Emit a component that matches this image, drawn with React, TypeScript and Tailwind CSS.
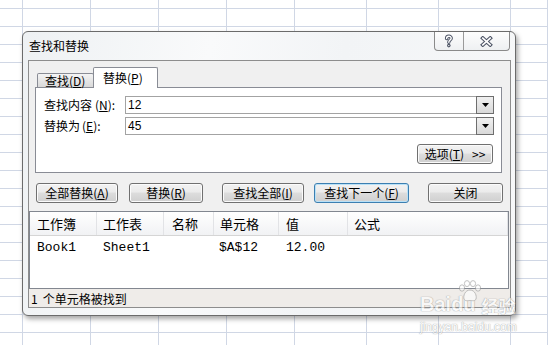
import React from "react";

function Btn({
  children,
  className,
  isDefault,
}: {
  children: React.ReactNode;
  className: string;
  isDefault?: boolean;
}) {
  return (
    <div
      className={
        className +
        " h-[20px] rounded-[3px] border flex items-center justify-center leading-none bg-[linear-gradient(#f2f2f2_0%,#ebebeb_45%,#dddddd_50%,#cfcfcf_100%)] " +
        (isDefault
          ? "border-[#3c7fb1] shadow-[inset_0_0_0_1px_#b9e1f7]"
          : "border-[#707070] shadow-[inset_0_0_0_1px_#fbfbfb]")
      }
    >
      {children}
    </div>
  );
}

function Combo({ value }: { value: string }) {
  return (
    <div className="w-[369px] h-[18px] flex border border-[#a3a3a3] bg-white">
      <span className="flex-1 pl-[2px] flex items-center font-['Liberation_Sans',sans-serif] text-[12px] leading-none">
        {value}
      </span>
      <div className="-my-px -mr-px w-[18px] border border-[#6e6e6e] bg-[linear-gradient(#f0f0f0,#d9d9d9)] flex items-center justify-center">
        <svg width="7" height="4" viewBox="0 0 7 4">
          <polygon points="0,0 7,0 3.5,4" fill="#000" />
        </svg>
      </div>
    </div>
  );
}

function HelpIcon() {
  const d = "M2.6 4.6 C2.6 1.6 7.2 1.6 7.2 4.2 C7.2 6 4.8 6.1 4.8 8.2";
  return (
    <svg width="10" height="14" viewBox="0 0 10 14">
      <path d={d} fill="none" stroke="#4e5566" strokeWidth="3.4" strokeLinecap="round" />
      <path d={d} fill="none" stroke="#ffffff" strokeWidth="1.4" strokeLinecap="round" />
      <circle cx="4.8" cy="11.6" r="1.8" fill="#4e5566" />
      <circle cx="4.8" cy="11.6" r="0.7" fill="#ffffff" />
    </svg>
  );
}

function CloseIcon() {
  const d = "M2.8 2.2 L10.2 8.8 M10.2 2.2 L2.8 8.8";
  return (
    <svg width="13" height="11" viewBox="0 0 13 11">
      <path d={d} fill="none" stroke="#4e5566" strokeWidth="3.8" strokeLinecap="square" />
      <path d={d} fill="none" stroke="#ffffff" strokeWidth="1.6" strokeLinecap="square" />
    </svg>
  );
}

function Dialog() {
  return (
    <div className="absolute left-[22px] top-[31px] w-[494px] h-[285px] rounded-[6px] border border-[#6b6b6b] bg-[linear-gradient(100deg,#eef1f3_0%,#f9fafb_35%,#f2f4f6_60%,#f7f8f9_100%)] shadow-[2px_3px_5px_rgba(0,0,0,0.35)] flex flex-col font-['Noto_Sans_CJK_SC',sans-serif] text-[12px] text-black">
      {/* title bar */}
      <div className="h-[28px] shrink-0 flex items-start justify-between">
        <span className="self-center pl-[6px] leading-none">查找和替换</span>
        <div className="mr-[5px] h-[19px] w-[76px] flex border border-t-0 border-[#8a8a8a] rounded-b-[4px] bg-[linear-gradient(#fdfdfd,#eef0f2)]">
          <div className="w-[29px] border-r border-[#9a9a9a] flex items-center justify-center">
            <HelpIcon />
          </div>
          <div className="flex-1 flex items-center justify-center">
            <CloseIcon />
          </div>
        </div>
      </div>

      {/* client area */}
      <div className="ml-[5px] mr-[4px] h-[248px] shrink-0 border border-[#8d8d8d] bg-[#f0f0f0] flex flex-col">
        <div className="mt-[6px] ml-[6px] mr-[8px]">
          <div className="flex items-end h-[20px] pl-[2px]">
            <div className="h-[14px] w-[57px] border border-b-0 border-[#898c95] rounded-t-[2px] bg-[linear-gradient(#f4f4f4,#d9d9d9)] flex items-center pl-[7px] leading-none">
              查找(<u>D</u>)
            </div>
            <div className="relative z-10 -ml-px -mb-px h-[21px] w-[65px] border border-b-0 border-[#898c95] rounded-t-[2px] bg-white flex items-center pl-[9px] leading-none">
              替换(<u>P</u>)
            </div>
          </div>
          <div className="h-[86px] border border-[#898c95] bg-white pt-[8px] flex flex-col">
            <div className="flex items-center h-[18px]">
              <span className="pl-[8px] w-[89px] leading-none">
                查找内容<span className="ml-[3px]">(<u>N</u>):</span>
              </span>
              <Combo value="12" />
            </div>
            <div className="mt-[3px] flex items-center h-[18px]">
              <span className="pl-[8px] w-[89px] leading-none">
                替换为<span className="ml-[2px]">(<u>E</u>):</span>
              </span>
              <Combo value="45" />
            </div>
            <Btn className="self-end mr-[8px] mt-[9px] w-[76px]">
              选项(<u>T</u>)<span className="ml-[8px]">&gt;&gt;</span>
            </Btn>
          </div>
        </div>

        <div className="mt-[10px] h-[20px] flex">
          <Btn className="ml-[7px] w-[82px]">
            全部替换(<u>A</u>)
          </Btn>
          <Btn className="ml-[11px] w-[74px]">
            替换(<u>R</u>)
          </Btn>
          <Btn className="ml-[19px] w-[82px]">
            查找全部(<u>I</u>)
          </Btn>
          <Btn isDefault className="ml-[10px] w-[95px]">
            查找下一个(<u>F</u>)
          </Btn>
          <Btn className="ml-[19px] w-[75px]">关闭</Btn>
        </div>

        {/* results list */}
        <div className="mt-[8px] mr-[1px] h-[78px] border border-[#828790] bg-white flex flex-col">
          <div className="h-[24px] shrink-0 flex border-b border-[#d5d5d5] bg-[linear-gradient(#ffffff,#f1f2f4)] text-[13px] leading-none">
            <div className="w-[67px] border-r border-[#e2e3e6] flex items-center pl-[7px]">工作簿</div>
            <div className="w-[67px] border-r border-[#e2e3e6] flex items-center pl-[6px]">工作表</div>
            <div className="w-[50px] border-r border-[#e2e3e6] flex items-center pl-[8px]">名称</div>
            <div className="w-[65px] border-r border-[#e2e3e6] flex items-center pl-[6px]">单元格</div>
            <div className="w-[69px] border-r border-[#e2e3e6] flex items-center pl-[7px]">值</div>
            <div className="flex-1 border-r border-[#e2e3e6] flex items-center pl-[6px]">公式</div>
          </div>
          <div className="h-[22px] flex items-center font-['Liberation_Mono',monospace] text-[13px] leading-none">
            <div className="w-[67px] pl-[7px]">Book1</div>
            <div className="w-[67px] pl-[6px]">Sheet1</div>
            <div className="w-[50px]" />
            <div className="w-[65px] pl-[5px]">$A$12</div>
            <div className="w-[69px] pl-[7px]">12.00</div>
          </div>
        </div>

        {/* status bar */}
        <div className="h-[18px] bg-[#efece9] flex items-center pl-[2px] pt-[1px] leading-none">
          <span>1</span>
          <span className="ml-[5px]">个单元格被找到</span>
        </div>
      </div>
    </div>
  );
}

function Watermark() {
  return (
    <div className="absolute left-[420px] top-[284px] flex flex-col items-start opacity-60 pointer-events-none">
      <div className="relative flex items-end h-[30px] font-['Liberation_Sans',sans-serif] font-bold text-[20px] leading-none text-white [text-shadow:0_0_1px_#7a7a7a,0_0_1px_#7a7a7a]">
        <span>Bai</span>
        <span className="relative">
          du
          <svg
            className="absolute left-[6px] top-[-14px]"
            width="26"
            height="22"
            viewBox="0 0 26 22"
          >
            <g fill="#ffffff" stroke="#9a9a9a" strokeWidth="1">
              <ellipse cx="5" cy="8" rx="2.6" ry="3.2" />
              <ellipse cx="10" cy="3.6" rx="2.6" ry="3" />
              <ellipse cx="16" cy="3.6" rx="2.6" ry="3" />
              <ellipse cx="21" cy="8" rx="2.6" ry="3.2" />
              <path d="M13 10 C8 10 6 16 7 19 C8 21.5 11 20.5 13 20.5 C15 20.5 18 21.5 19 19 C20 16 18 10 13 10 Z" />
            </g>
          </svg>
        </span>
        <span className="ml-[6px] font-['Noto_Sans_CJK_SC',sans-serif] text-[17px]">经验</span>
      </div>
      <div className="mt-[7px] font-['Liberation_Sans',sans-serif] text-[12px] leading-none text-white [text-shadow:0_0_1px_#7a7a7a,0_0_1px_#7a7a7a]">
        jingyan.baidu.com
      </div>
    </div>
  );
}

export default function App() {
  const cells = Array.from({ length: 20 * 9 });
  return (
    <div className="relative w-[548px] h-[345px] overflow-hidden bg-white">
      <div className="grid grid-cols-[23px_68px_68px_68px_68px_72px_72px_72px_1fr] grid-rows-[9px_repeat(19,18px)]">
        {cells.map((_, i) => (
          <div key={i} className="border-r border-b border-[#d0d7e5]" />
        ))}
      </div>
      <Dialog />
      <Watermark />
    </div>
  );
}
